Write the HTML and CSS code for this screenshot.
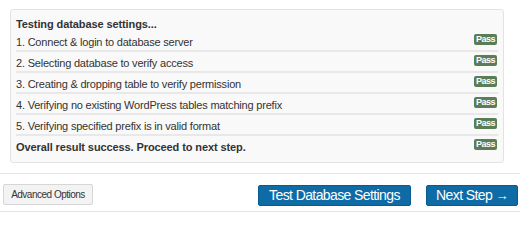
FILE: index.html
```html
<!DOCTYPE html>
<html>
<head>
<meta charset="utf-8">
<link rel="stylesheet" href="styles.css">
</head>
<body>
<div class="page">
  <div class="panel">
    <div class="title">Testing database settings...</div>
    <div class="row"><span class="label">1. Connect &amp; login to database server</span><span class="pass">Pass</span></div>
    <div class="row"><span class="label">2. Selecting database to verify access</span><span class="pass">Pass</span></div>
    <div class="row"><span class="label">3. Creating &amp; dropping table to verify permission</span><span class="pass">Pass</span></div>
    <div class="row"><span class="label">4. Verifying no existing WordPress tables matching prefix</span><span class="pass">Pass</span></div>
    <div class="row"><span class="label">5. Verifying specified prefix is in valid format</span><span class="pass">Pass</span></div>
    <div class="row last"><span class="label strong">Overall result success. Proceed to next step.</span><span class="pass">Pass</span></div>
  </div>
  <div class="footer">
    <button class="btn btn-default">Advanced Options</button>
    <div class="actions">
      <button class="btn btn-primary btn-test">Test Database Settings</button>
      <button class="btn btn-primary btn-next">Next Step <span class="arrow">&#x2192;</span></button>
    </div>
  </div>
</div>
</body>
</html>
```

FILE: styles.css
```css
html, body {
  margin: 0;
  padding: 0;
  background: #ffffff;
}
body {
  font-family: "Liberation Sans", Arial, sans-serif;
  color: #333333;
}
.page {
  width: 520px;
  padding-top: 9px;
}
.panel {
  margin-left: 10px;
  width: 494px;
  box-sizing: border-box;
  height: 154px;
  border: 1px solid #e3e3e3;
  border-radius: 3px;
  background: #f9f9f9;
  padding: 7px 5px 0 5px;
}
.title {
  font-weight: bold;
  font-size: 11px;
  letter-spacing: -0.1px;
  height: 14px;
  line-height: 14px;
}
.row {
  display: flex;
  justify-content: space-between;
  align-items: flex-start;
  height: 19px;
  border-bottom: 2px solid #e8e8e8;
  font-size: 11px;
  letter-spacing: -0.2px;
  line-height: 13px;
}
.row .label {
  padding-top: 5px;
}
.row.last {
  border-bottom: none;
}
.strong {
  font-weight: bold;
  letter-spacing: -0.1px;
}
.pass {
  margin-top: 3px;
  background: #5a7d58;
  color: #ffffff;
  font-weight: bold;
  font-size: 9px;
  line-height: 11px;
  height: 11px;
  padding: 0 2px;
  border-radius: 2px;
  margin-right: 1px;
  letter-spacing: -0.5px;
}
.footer {
  margin-top: 10px;
  border-top: 1px solid #e4e4e4;
  border-bottom: 1px solid #e4e4e4;
  height: 39px;
  box-sizing: border-box;
  display: flex;
  justify-content: space-between;
  align-items: flex-start;
  padding: 10px 2px 0 3px;
}
.actions {
  display: flex;
  gap: 15px;
}
.btn {
  font-family: "Liberation Sans", Arial, sans-serif;
  margin: 0;
  cursor: pointer;
  border-radius: 2px;
  box-sizing: border-box;
  white-space: nowrap;
}
.btn-default {
  width: 90px;
  height: 21px;
  background: #f3f3f3;
  border: 1px solid #d6d6d6;
  color: #333333;
  font-size: 10px;
  letter-spacing: -0.5px;
  padding: 0;
}
.btn-primary {
  margin-top: 1px;
  height: 21px;
  background: #0f6ba6;
  border: 1px solid #0b5a8e;
  color: #ffffff;
  font-size: 14px;
  letter-spacing: -0.6px;
  line-height: 19px;
  padding: 0;
}
.btn-test {
  width: 153px;
}
.btn-next {
  width: 92px;
}
.arrow {
  font-size: 13px;
}
```
